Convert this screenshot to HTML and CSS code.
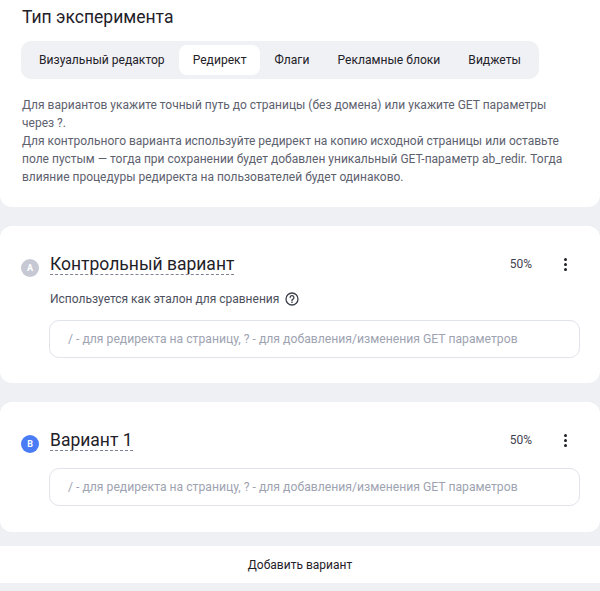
FILE: index.html
```html
<!DOCTYPE html>
<html lang="ru">
<head>
<meta charset="utf-8">
<link rel="stylesheet" href="styles.css">
</head>
<body>
<div class="page">
  <section class="block type-block">
    <h2 class="type-title">Тип эксперимента</h2>
    <div class="tabs">
      <span class="tab">Визуальный редактор</span>
      <span class="tab tab-active">Редирект</span>
      <span class="tab">Флаги</span>
      <span class="tab">Рекламные блоки</span>
      <span class="tab">Виджеты</span>
    </div>
    <p class="hint">Для вариантов укажите точный путь до страницы (без домена) или укажите GET параметры через ?.<br>Для контрольного варианта используйте редирект на копию исходной страницы или оставьте поле пустым — тогда при сохранении будет добавлен уникальный GET-параметр ab_redir. Тогда влияние процедуры редиректа на пользователей будет одинаково.</p>
  </section>

  <section class="block variant variant-control">
    <div class="variant-head">
      <span class="badge badge-a">A</span>
      <span class="variant-name">Контрольный вариант</span>
      <span class="share">50%</span>
      <span class="kebab"><i></i><i></i><i></i></span>
    </div>
    <div class="variant-note">Используется как эталон для сравнения
      <svg class="help" width="14" height="14" viewBox="0 0 14 14"><circle cx="7" cy="7" r="6" fill="none" stroke="#3b3f4a" stroke-width="1.3"/><path d="M5.1 5.5a1.9 1.9 0 1 1 2.6 1.8c-.5.2-.7.5-.7 1v.4" fill="none" stroke="#3b3f4a" stroke-width="1.3" stroke-linecap="round"/><circle cx="7" cy="10.2" r=".8" fill="#3b3f4a"/></svg>
    </div>
    <div class="field">/ - для редиректа на страницу, ? - для добавления/изменения GET параметров</div>
  </section>

  <section class="block variant variant-extra">
    <div class="variant-head">
      <span class="badge badge-b">B</span>
      <span class="variant-name">Вариант 1</span>
      <span class="share">50%</span>
      <span class="kebab"><i></i><i></i><i></i></span>
    </div>
    <div class="field">/ - для редиректа на страницу, ? - для добавления/изменения GET параметров</div>
  </section>

  <section class="block add-block">Добавить вариант</section>
</div>
</body>
</html>
```

FILE: styles.css
```css
html, body {
  margin: 0;
  padding: 0;
}

body {
  background: #eef0f4;
  font-family: Roboto, "Noto Sans", sans-serif;
  color: #1f2129;
}

.page {
  display: flex;
  flex-direction: column;
  gap: 19px;
  padding-bottom: 9px;
}

.block {
  background: #fff;
  border-radius: 12px;
}

.type-block {
  border-radius: 0 0 12px 12px;
  padding: 5px 22px 21px;
}

.type-title {
  margin: 0;
  font-size: 17.5px;
  font-weight: 400;
  line-height: 24px;
}

.tabs {
  display: inline-flex;
  margin: 12px 0 0 -1px;
  padding: 4px;
  background: #eff1f5;
  border-radius: 10px;
  font-size: 12.1px;
}

.tab {
  padding: 0 14px;
  line-height: 30px;
  border-radius: 8px;
}

.tab-active {
  background: #fff;
}

.hint {
  margin: 17px 0 0;
  font-size: 12px;
  line-height: 18px;
  color: #5d616e;
  max-width: 556px;
}

.variant {
  padding: 26px 20px 25px 20px;
}

.variant-head {
  display: flex;
  align-items: center;
  height: 24px;
}

.badge {
  width: 18px;
  height: 18px;
  border-radius: 50%;
  margin: 8px 11px 0 1px;
  display: inline-flex;
  align-items: center;
  justify-content: center;
  color: #fff;
  font-size: 9px;
  font-weight: 700;
}

.badge-a {
  background: #c6c9d4;
}

.badge-b {
  background: #4a7cf6;
}

.variant-name {
  font-size: 17.5px;
  line-height: 20px;
  border-bottom: 1px dashed #7d8394;
  flex: none;
}

.share {
  margin-left: auto;
  font-size: 12px;
  color: #3f4350;
}

.kebab {
  display: inline-flex;
  flex-direction: column;
  gap: 2px;
  margin: 0 13px 0 32px;
}

.kebab i {
  width: 3px;
  height: 3px;
  border-radius: 50%;
  background: #1f2129;
}

.variant-note {
  display: flex;
  align-items: center;
  gap: 6px;
  margin: 16px 0 0 30px;
  font-size: 12px;
  color: #4c505c;
}

.field {
  margin: 14px 0 0 29px;
  height: 38px;
  box-sizing: border-box;
  border: 1px solid #e1e3ea;
  border-radius: 10px;
  padding: 0 18px;
  display: flex;
  align-items: center;
  font-size: 12.2px;
  color: #9ea3b1;
}

.variant-extra {
  padding-bottom: 26px;
}

.variant-extra .field {
  margin-top: 16px;
}

.add-block {
  margin-top: -5px;
  height: 37px;
  display: flex;
  align-items: center;
  justify-content: center;
  font-size: 12px;
  border-radius: 0;
}
```
